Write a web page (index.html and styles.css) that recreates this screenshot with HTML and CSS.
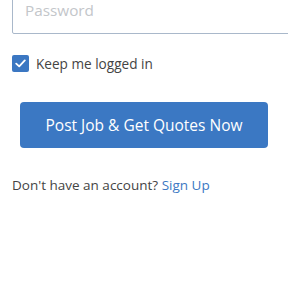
FILE: index.html
```html
<!DOCTYPE html>
<html>
<head>
<meta charset="utf-8">
<link rel="stylesheet" href="styles.css">
</head>
<body>
<form class="form">
  <input class="field" type="password" placeholder="Password">
  <label class="remember">
    <span class="check">
      <svg width="11" height="9" viewBox="0 0 11 9"><path d="M1.2 4.6 L4.2 7.4 L9.8 1.4" fill="none" stroke="#fff" stroke-width="1.8" stroke-linecap="round" stroke-linejoin="round"/></svg>
    </span>
    <span class="remember-text">Keep me logged in</span>
  </label>
  <button class="submit" type="button">Post Job &amp; Get Quotes Now</button>
  <p class="signup">Don't have an account? <a class="link" href="#">Sign Up</a></p>
</form>
</body>
</html>
```

FILE: styles.css
```css
html, body {
  margin: 0;
  padding: 0;
  background: #fff;
}
body {
  font-family: "Open Sans", "Liberation Sans", sans-serif;
  color: #444;
}
.form {
  display: flex;
  flex-direction: column;
  padding: 0 0 0 12px;
}
.field {
  box-sizing: border-box;
  margin: -12px 0 0 0;
  width: 290px;
  height: 46px;
  border: 1px solid #a9b8ca;
  border-radius: 2px;
  padding: 0 12px 3px 12px;
  font-family: "Open Sans", sans-serif;
  font-size: 15.3px;
  color: #444;
  outline: none;
}
.field::placeholder {
  color: #c3c6ca;
}
.remember {
  display: flex;
  align-items: center;
  gap: 7px;
  margin-top: 20px;
  height: 18px;
}
.check {
  width: 17px;
  height: 17px;
  border-radius: 2px;
  background: #3b77c2;
  display: flex;
  align-items: center;
  justify-content: center;
}
.remember-text {
  font-size: 13.6px;
  color: #444;
}
.submit {
  margin: 30px 0 0 8px;
  width: 248px;
  height: 46px;
  border: none;
  border-radius: 4px;
  background: #3b78c3;
  color: #fff;
  font-family: "Open Sans", sans-serif;
  font-size: 15.5px;
  padding: 0;
}
.signup {
  margin: 28px 0 0 0;
  font-size: 13.5px;
  color: #444;
}
.link {
  color: #3b78c3;
  text-decoration: none;
}
```
